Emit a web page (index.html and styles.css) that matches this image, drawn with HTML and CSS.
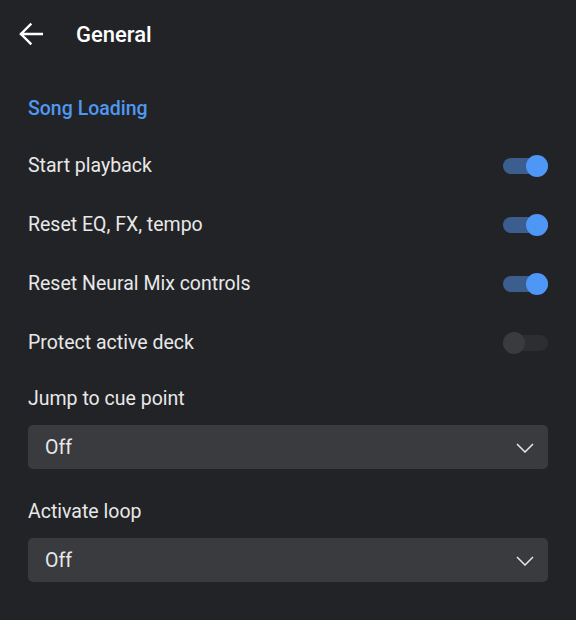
FILE: index.html
```html
<!DOCTYPE html>
<html lang="en">
<head>
    <meta charset="UTF-8">
    <meta name="viewport" content="width=device-width, initial-scale=1.0">
    <title>General</title>
    <link rel="stylesheet" href="styles.css">
</head>
<body>
    <header class="topbar">
        <button class="back-btn" type="button" aria-label="Back">
            <svg width="24" height="24" viewBox="0 0 24 24">
                <path d="M2 12H23M11.5 2.5L2 12l9.5 9.5" fill="none" stroke="#ffffff" stroke-width="2.4" stroke-linecap="square"/>
            </svg>
        </button>
        <h1>General</h1>
    </header>

    <section class="settings">
        <h2 class="section-title">Song Loading</h2>

        <div class="row">
            <span>Start playback</span>
            <span class="switch on"><span class="thumb"></span></span>
        </div>
        <div class="row">
            <span>Reset EQ, FX, tempo</span>
            <span class="switch on"><span class="thumb"></span></span>
        </div>
        <div class="row">
            <span>Reset Neural Mix controls</span>
            <span class="switch on"><span class="thumb"></span></span>
        </div>
        <div class="row">
            <span>Protect active deck</span>
            <span class="switch"><span class="thumb"></span></span>
        </div>

        <div class="field">
            <label>Jump to cue point</label>
            <div class="select">
                <span>Off</span>
                <svg width="18" height="10" viewBox="0 0 18 10">
                    <path d="M1 1l8 8 8-8" fill="none" stroke="#e8e8e8" stroke-width="1.5"/>
                </svg>
            </div>
        </div>

        <div class="field">
            <label>Activate loop</label>
            <div class="select">
                <span>Off</span>
                <svg width="18" height="10" viewBox="0 0 18 10">
                    <path d="M1 1l8 8 8-8" fill="none" stroke="#e8e8e8" stroke-width="1.5"/>
                </svg>
            </div>
        </div>
    </section>
</body>
</html>
```

FILE: styles.css
```css
body {
    margin: 0;
    padding: 0;
    background-color: #222326;
    color: #e8e8e8;
    font-family: Roboto, "Noto Sans", sans-serif;
    height: 620px;
    overflow: hidden;
}
.topbar {
    height: 68px;
    display: flex;
    align-items: center;
    padding-left: 19px;
}
.back-btn {
    width: 24px;
    height: 24px;
    padding: 0;
    border: none;
    background: none;
    display: flex;
}
.topbar h1 {
    margin: 0 0 0 33px;
    font-size: 22px;
    font-weight: 500;
    color: #ffffff;
}
.settings {
    padding: 0 28px;
}
.section-title {
    margin: 29px 0 15px;
    font-size: 19.5px;
    line-height: 24px;
    font-weight: 500;
    color: #4f98f2;
}
.row {
    height: 59px;
    display: flex;
    justify-content: space-between;
    align-items: center;
    font-size: 19.5px;
}
.switch {
    position: relative;
    width: 45px;
    height: 16px;
    border-radius: 8px;
    background-color: #2d2e31;
}
.switch .thumb {
    position: absolute;
    top: -3px;
    left: 0;
    width: 22px;
    height: 22px;
    border-radius: 50%;
    background-color: #3a3b3e;
}
.switch.on {
    background-color: #3c5e8e;
}
.switch.on .thumb {
    left: auto;
    right: 0;
    background-color: #4f97f7;
}
.field {
    margin-top: 14px;
}
.field + .field {
    margin-top: 30px;
}
.field label {
    display: block;
    font-size: 19.5px;
    line-height: 24px;
    padding-top: 1px;
    margin-bottom: 14px;
}
.select {
    height: 43px;
    border-radius: 5px;
    background-color: #3a3b3e;
    display: flex;
    justify-content: space-between;
    align-items: center;
    padding: 1px 14px 0 17px;
    font-size: 19.5px;
}
```
